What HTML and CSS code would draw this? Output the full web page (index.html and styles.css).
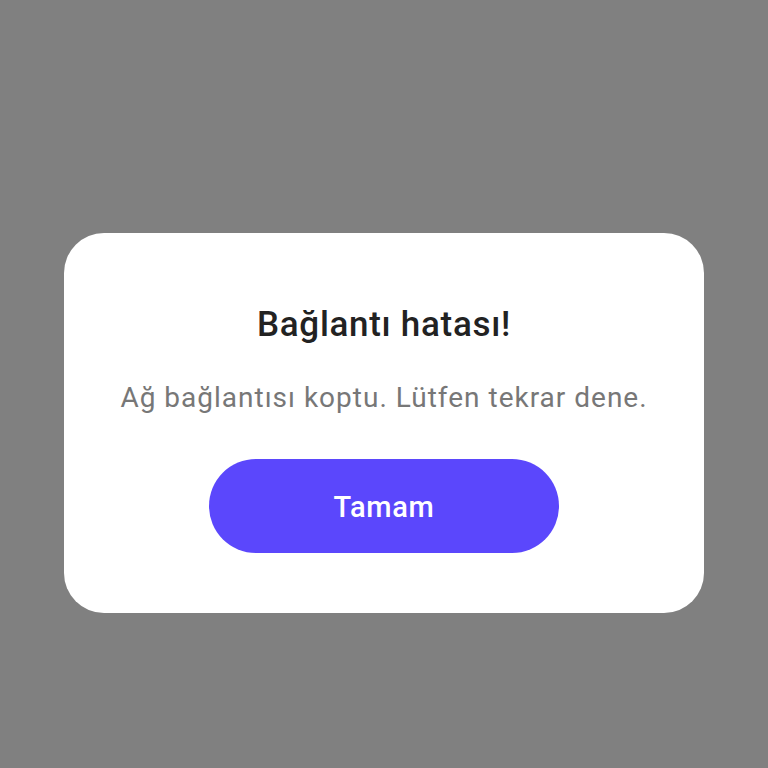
FILE: index.html
```html
<!DOCTYPE html>
<html lang="tr">
<head>
    <meta charset="UTF-8">
    <meta name="viewport" content="width=device-width, initial-scale=1.0">
    <title>Bağlantı hatası</title>
    <link rel="stylesheet" href="styles.css">
</head>
<body>
    <div class="dialog">
        <h2 class="dialog-title">Bağlantı hatası!</h2>
        <p class="dialog-message">Ağ bağlantısı koptu. Lütfen tekrar dene.</p>
        <button class="dialog-button" type="button">Tamam</button>
    </div>
</body>
</html>
```

FILE: styles.css
```css
body {
    margin: 0;
    padding-top: 233px;
    min-height: 768px;
    box-sizing: border-box;
    background-color: #808080;
    font-family: Roboto, "Noto Sans", sans-serif;
}

.dialog {
    margin: 0 64px;
    padding: 72px 40px 60px;
    background: #fff;
    border-radius: 40px;
    display: flex;
    flex-direction: column;
    align-items: center;
}

.dialog-title {
    margin: 0;
    font-size: 35px;
    line-height: 40px;
    font-weight: 500;
    letter-spacing: 0.7px;
    color: #222;
}

.dialog-message {
    margin: 36px 0 0;
    font-size: 28px;
    line-height: 34px;
    letter-spacing: 1px;
    color: #777;
}

.dialog-button {
    margin-top: 44px;
    width: 350px;
    height: 94px;
    padding-top: 2px;
    border: none;
    border-radius: 47px;
    background-color: #5b47fc;
    color: #fff;
    font-family: inherit;
    font-size: 29px;
    font-weight: 500;
    letter-spacing: 0.7px;
    cursor: pointer;
}
```
